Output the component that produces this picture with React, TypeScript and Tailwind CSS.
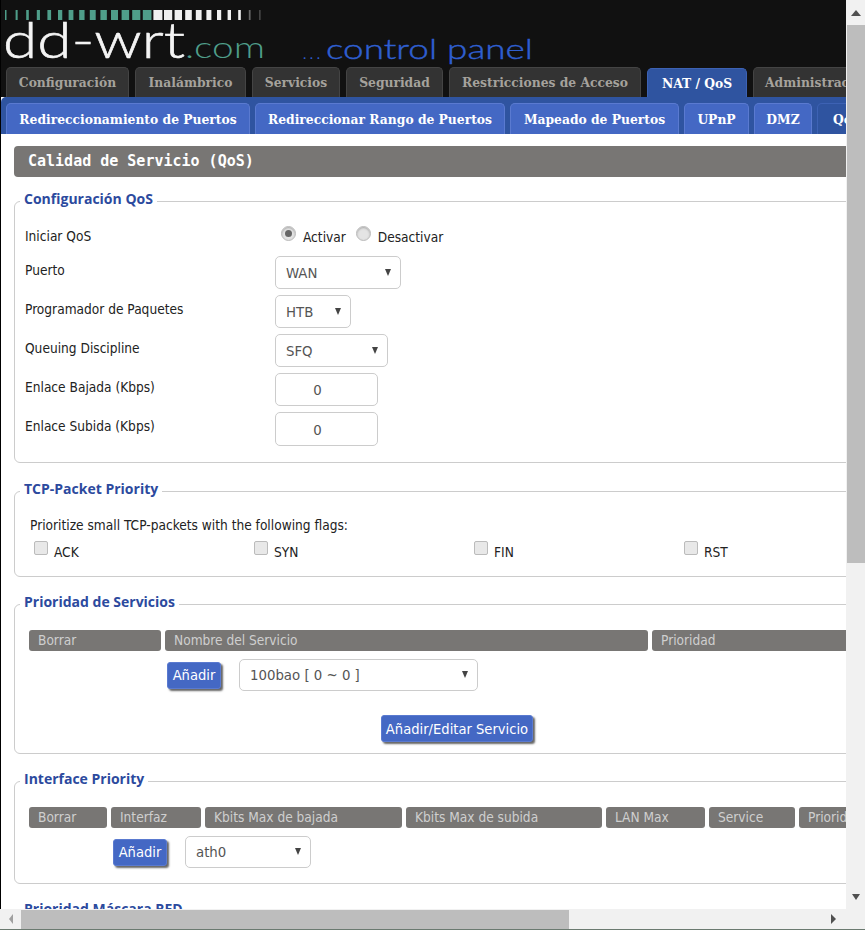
import React from 'react';

const mainTabs = [
  { label: 'Configuración', w: 'w-[123px]' },
  { label: 'Inalámbrico', w: 'w-[111px]' },
  { label: 'Servicios', w: 'w-[88px]' },
  { label: 'Seguridad', w: 'w-[97px]' },
  { label: 'Restricciones de Acceso', w: 'w-[192px]' },
  { label: 'NAT / QoS', w: 'w-[100px]', active: true },
  { label: 'Administración', w: 'w-[130px]' },
];

const subTabs = [
  { label: 'Redireccionamiento de Puertos', w: 'w-[244px]' },
  { label: 'Redireccionar Rango de Puertos', w: 'w-[250px]' },
  { label: 'Mapeado de Puertos', w: 'w-[169px]' },
  { label: 'UPnP', w: 'w-[65px]' },
  { label: 'DMZ', w: 'w-[58px]' },
  { label: 'QoS', w: 'w-[60px]', active: true },
];

// level meter above the logo: x, width, colour
const bars = Array.from({ length: 25 }, (_, i) => {
  const w = i < 14 ? 1.5 + i * 0.55 : 9 - (i - 14) * 0.8;
  const fill = i < 14 ? '#4f9e8a' : i < 23 ? '#f0f0f0' : '#666666';
  return { x: 5 + i * 10.6, w: Math.max(w, 1), fill };
});

const Logo = () => (
  <svg width="560" height="67" viewBox="0 0 560 67" className="block">
    {bars.map((b, i) => (
      <rect key={i} x={b.x} y="10" width={b.w} height="10" fill={b.fill} />
    ))}
    <text x="3" y="58" fontFamily="Lato" fontWeight="300" fontSize="50" fill="#f4f4f4" stroke="#f4f4f4" strokeWidth="0.6" textLength="182" lengthAdjust="spacingAndGlyphs">dd-wrt</text>
    <text x="185" y="58" fontFamily="Lato" fontWeight="300" fontSize="30" fill="#4f9e8a" textLength="80" lengthAdjust="spacingAndGlyphs">.com</text>
    <text x="303" y="59" fontFamily="Lato" fontSize="14" fill="#2f5fd0" textLength="17" lengthAdjust="spacing">...</text>
    <text x="326" y="59" fontFamily="Lato" fontWeight="300" fontSize="28" fill="#2f5fd0" stroke="#2f5fd0" strokeWidth="0.4" textLength="207" lengthAdjust="spacingAndGlyphs">control panel</text>
  </svg>
);

const Select = ({ value, w }: { value: string; w: string }) => (
  <div className={`${w} h-full flex items-center justify-between pl-[10px] pr-[9px] border border-[#cccccc] rounded-[5px] bg-white text-[#555555] text-[14.8px] shrink-0`}>
    <span className="mt-[1px]">{value}</span>
    <span className="w-0 h-0 border-x-[3.5px] border-x-transparent border-t-[7px] border-t-[#444444] mb-[1px]" />
  </div>
);

const Button = ({ label, w }: { label: string; w: string }) => (
  <button className={`${w} h-[27px] bg-[#4468c4] text-white text-[14.6px] rounded-[3px] border border-[#5a7ad0] shadow-[2px_2px_2px_#666666] shrink-0 whitespace-nowrap`}>
    {label}
  </button>
);

const Section = ({ title, className, children }: { title: string; className: string; children: React.ReactNode }) => (
  <fieldset className={`w-[1200px] border border-[#cccccc] rounded-[6px] ${className}`}>
    <legend className="ml-[5px] pl-[4px] pr-[4px] h-[20px] leading-[16px] text-[14px] font-bold text-[#2c4a9e] font-['Open_Sans',sans-serif]">{title}</legend>
    {children}
  </fieldset>
);

const Row = ({ label, h, children }: { label: string; h: string; children: React.ReactNode }) => (
  <div className={`flex ${h}`}>
    <div className="w-[260px] pl-[10px] pt-[4px] leading-[20px] text-[13.6px] text-[#222222] shrink-0">{label}</div>
    {children}
  </div>
);

const Radio = ({ checked }: { checked?: boolean }) => (
  <span className="w-[15px] h-[15px] rounded-full border border-[#bbbbbb] bg-[#e4e4e4] shadow-[inset_0_1px_2px_#aaaaaa] flex items-center justify-center shrink-0">
    {checked && <span className="w-[7px] h-[7px] rounded-full bg-[#666666]" />}
  </span>
);

const Flag = ({ label, w }: { label: string; w: string }) => (
  <div className={`${w} flex items-start gap-[6px] text-[13.6px] text-[#222222] shrink-0`}>
    <span className="w-[14px] h-[14px] rounded-[2px] border border-[#bbbbbb] bg-[#e8e8e8] shrink-0" />
    <span className="mt-[1px] leading-[20px]">{label}</span>
  </div>
);

const Head = ({ label, w }: { label: string; w: string }) => (
  <div className={`${w} h-[21px] leading-[21px] pl-[9px] bg-[#787674] text-[#cfcfcf] text-[13.6px] rounded-[3px] shrink-0 whitespace-nowrap overflow-hidden`}>
    {label}
  </div>
);

const Arrow = ({ dir }: { dir: 'up' | 'down' | 'left' | 'right' }) => {
  const cls = {
    up: 'border-x-[5px] border-x-transparent border-b-[6px] border-b-[#505050]',
    down: 'border-x-[4px] border-x-transparent border-t-[6px] border-t-[#505050]',
    left: 'border-y-[5px] border-y-transparent border-r-[4px] border-r-[#a0a0a0]',
    right: 'border-y-[5px] border-y-transparent border-l-[5px] border-l-[#505050]',
  }[dir];
  return <span className={`w-0 h-0 ${cls}`} />;
};

export default function App() {
  return (
    <div className="w-[865px] h-[930px] overflow-hidden flex flex-col bg-white font-['DejaVu_Sans_Condensed','Open_Sans',sans-serif]">
      <div className="flex h-[909px]">
        <div className="w-[846px] h-full overflow-hidden border-l border-black shrink-0">
          {/* Header */}
          <div className="h-[97px] bg-[#111111] -ml-px">
            <Logo />
            <div className="flex gap-[6px] pl-[6px] h-[30px] items-end font-['DejaVu_Serif_Condensed','Liberation_Serif',serif] font-bold text-[13.7px]">
              {mainTabs.map((t) => (
                <div
                  key={t.label}
                  className={`${t.w} shrink-0 flex items-center justify-center rounded-t-[5px] whitespace-nowrap overflow-hidden border-t border-x ${
                    t.active ? 'h-[29px] bg-[#2f54a0] border-[#3d62b4] text-white' : 'h-[30px] bg-[#333333] border-[#444444] text-[#a5a29c]'
                  }`}
                >
                  {t.label}
                </div>
              ))}
            </div>
          </div>

          {/* Sub tabs */}
          <div className="h-[37px] bg-[#2f54a0] rounded-tl-[5px] flex gap-[5px] pl-[5px] items-end font-['DejaVu_Serif_Condensed','Liberation_Serif',serif] font-bold text-[13.7px] text-white">
            {subTabs.map((t) => (
              <div
                key={t.label}
                className={`${t.w} h-[31px] shrink-0 flex items-center justify-center rounded-t-[5px] whitespace-nowrap border-t border-x ${
                  t.active ? 'bg-[#2f54a0] border-[#3d62b4]' : 'bg-[#4468c4] border-[#5a7ad0]'
                }`}
              >
                {t.label}
              </div>
            ))}
          </div>

          {/* Content */}
          <div className="pl-[13px] pt-[12px]">
            <div className="w-[1200px] h-[31px] leading-[31px] pl-[14px] bg-[#787674] rounded-[4px] text-white font-bold text-[15px] font-['DejaVu_Sans_Mono','Liberation_Mono',monospace]">
              Calidad de Servicio (QoS)
            </div>

            <Section title="Configuración QoS" className="mt-[14px] pt-[11px] pb-[16px]">
              <Row label="Iniciar QoS" h="h-[34px]">
                <div className="flex items-start text-[13.6px] text-[#222222] pl-[6px]">
                  <span className="mt-[4px]"><Radio checked /></span>
                  <span className="ml-[7px] mt-[5px] leading-[20px]">Activar</span>
                  <span className="ml-[10px] mt-[4px]"><Radio /></span>
                  <span className="ml-[7px] mt-[5px] leading-[20px]">Desactivar</span>
                </div>
              </Row>
              <Row label="Puerto" h="h-[39px] pb-[6px]"><Select value="WAN" w="w-[126px]" /></Row>
              <Row label="Programador de Paquetes" h="h-[39px] pb-[6px]"><Select value="HTB" w="w-[76px]" /></Row>
              <Row label="Queuing Discipline" h="h-[39px] pb-[6px]"><Select value="SFQ" w="w-[113px]" /></Row>
              <Row label="Enlace Bajada (Kbps)" h="h-[39px] pb-[6px]">
                <input readOnly value="0" className="w-[103px] h-full border border-[#cccccc] rounded-[5px] text-center pr-[18px] text-[14.8px] text-[#555555]" />
              </Row>
              <Row label="Enlace Subida (Kbps)" h="h-[34px]">
                <input readOnly value="0" className="w-[103px] h-full border border-[#cccccc] rounded-[5px] text-center pr-[18px] text-[14.8px] text-[#555555]" />
              </Row>
            </Section>

            <Section title="TCP-Packet Priority" className="mt-[18px] pt-[14px] pb-[14px]">
              <div className="pl-[15px] leading-[20px] text-[13.6px] text-[#222222]">Prioritize small TCP-packets with the following flags:</div>
              <div className="flex pl-[19px] mt-[6px]">
                <Flag label="ACK" w="w-[220px]" />
                <Flag label="SYN" w="w-[220px]" />
                <Flag label="FIN" w="w-[210px]" />
                <Flag label="RST" w="w-[100px]" />
              </div>
            </Section>

            <Section title="Prioridad de Servicios" className="mt-[17px] pt-[16px] pb-[11px]">
              <div className="flex gap-[4px] pl-[14px]">
                <Head label="Borrar" w="w-[132px]" />
                <Head label="Nombre del Servicio" w="w-[483px]" />
                <Head label="Prioridad" w="w-[300px]" />
              </div>
              <div className="flex items-center h-[32px] mt-[8px] pl-[152px]">
                <Button label="Añadir" w="w-[54px]" />
                <div className="ml-[18px] h-full"><Select value="100bao [ 0 ~ 0 ]" w="w-[239px]" /></div>
              </div>
              <div className="pl-[366px] mt-[24px]">
                <Button label="Añadir/Editar Servicio" w="w-[152px]" />
              </div>
            </Section>

            <Section title="Interface Priority" className="mt-[17px] pt-[16px] pb-[15px]">
              <div className="flex gap-[4px] pl-[14px]">
                <Head label="Borrar" w="w-[78px]" />
                <Head label="Interfaz" w="w-[90px]" />
                <Head label="Kbits Max de bajada" w="w-[197px]" />
                <Head label="Kbits Max de subida" w="w-[196px]" />
                <Head label="LAN Max" w="w-[99px]" />
                <Head label="Service" w="w-[86px]" />
                <Head label="Prioridad" w="w-[100px]" />
              </div>
              <div className="flex items-center h-[32px] mt-[8px] pl-[98px]">
                <Button label="Añadir" w="w-[54px]" />
                <div className="ml-[18px] h-full"><Select value="ath0" w="w-[126px]" /></div>
              </div>
            </Section>

            <Section title="Prioridad Máscara RED" className="mt-[17px] pt-[16px] pb-[15px]">
              <div className="h-[60px]" />
            </Section>
          </div>
        </div>

        {/* Vertical scrollbar */}
        <div className="w-[19px] h-full bg-[#f1f1f1] flex flex-col shrink-0">
          <div className="h-[25px] flex items-center justify-center"><Arrow dir="up" /></div>
          <div className="h-[538px] bg-[#bdbdbd] ml-[1px]" />
          <div className="flex-1 flex items-end justify-center pb-[9px]"><Arrow dir="down" /></div>
        </div>
      </div>

      {/* Horizontal scrollbar */}
      <div className="h-[21px] bg-[#f1f1f1] flex items-center border-b border-[#6b7a70]">
        <div className="w-[21px] flex justify-center"><Arrow dir="left" /></div>
        <div className="w-[548px] h-[19px] bg-[#bdbdbd]" />
        <div className="flex-1 flex justify-end pr-[29px]"><Arrow dir="right" /></div>
      </div>
    </div>
  );
}
